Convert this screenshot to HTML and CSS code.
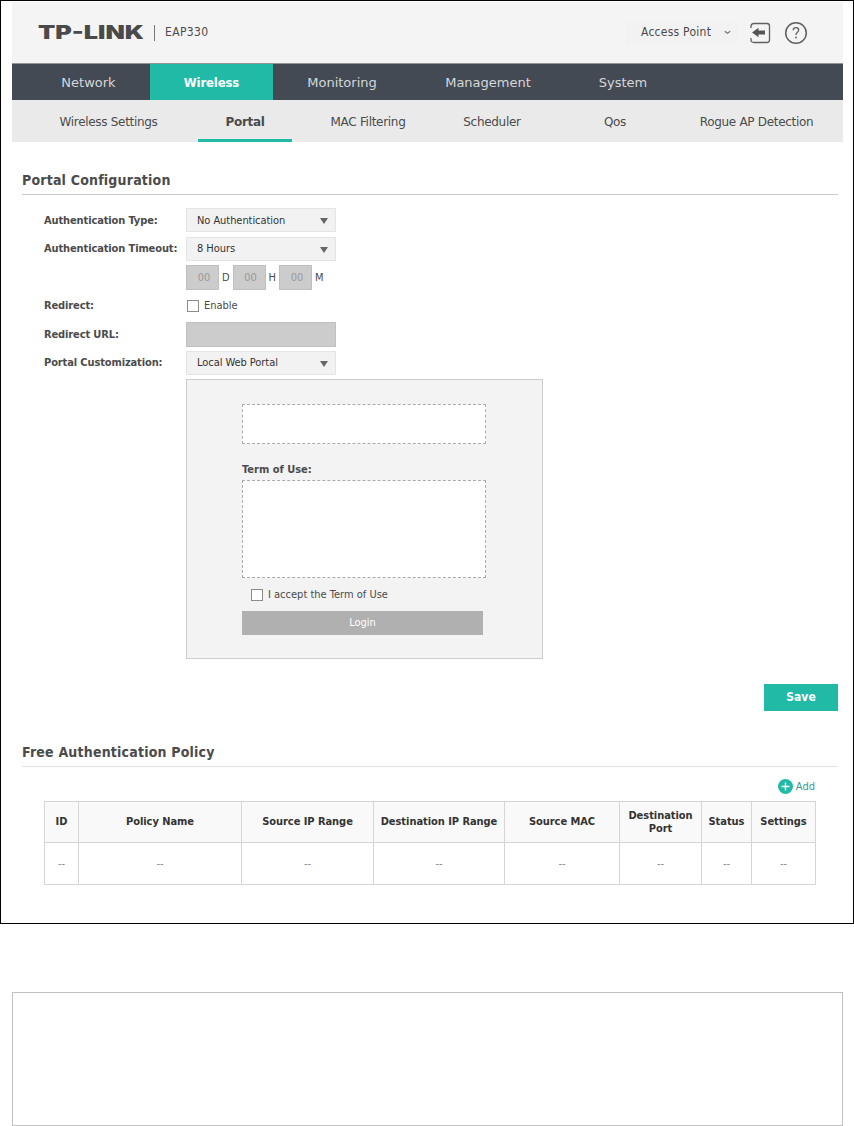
FILE: index.html
```html
<!DOCTYPE html>
<html lang="en">
<head>
<meta charset="utf-8">
<title>EAP330</title>
<link rel="stylesheet" href="styles.css">
</head>
<body>
<main class="frame">
  <header class="top">
    <svg class="logo" width="112" height="24" viewBox="0 0 112 24"><text x="0" y="18" textLength="106" lengthAdjust="spacingAndGlyphs">TP-LINK</text></svg>
    <span class="divider"></span>
    <span class="model">EAP330</span>
    <div class="mode"><span>Access Point</span><svg width="7" height="5" viewBox="0 0 7 5"><path d="M.8 1.2 3.5 3.3 6.2 1.2" fill="none" stroke="#777" stroke-width="1.3"/></svg></div>
    <svg class="logout" width="21" height="22" viewBox="0 0 21 22"><path d="M1 6V4Q1 1.5 4 1.5H17Q19.5 1.5 19.5 4V18Q19.5 20.5 17 20.5H4Q1 20.5 1 18V16" fill="none" stroke="#606060" stroke-width="1.3"/><path d="M2 10.5 8.5 5.8V8.5H15V12.5H8.5V15.2Z" fill="#555"/></svg>
    <svg class="help" width="24" height="24" viewBox="0 0 24 24"><circle cx="12" cy="12" r="10.3" fill="none" stroke="#606060" stroke-width="1.5"/><path d="M9.2 9.2Q9.3 6.7 12 6.7 14.7 6.7 14.7 9.1 14.7 10.5 13.2 11.5 12 12.3 12 14" fill="none" stroke="#606060" stroke-width="1.3"/><rect x="11.2" y="15.7" width="1.6" height="1.7" fill="#606060"/></svg>
  </header>
  <nav class="nav"><a>Network</a><a class="on">Wireless</a><a>Monitoring</a><a>Management</a><a>System</a></nav>
  <nav class="sub"><a>Wireless Settings</a><a class="on">Portal</a><a>MAC Filtering</a><a>Scheduler</a><a>Qos</a><a>Rogue AP Detection</a></nav>

  <section class="portal">
    <h2>Portal Configuration</h2>
    <div class="form">
      <label>Authentication Type:</label><div class="select"><span>No Authentication</span><i></i></div>
      <label>Authentication Timeout:</label><div class="select"><span>8 Hours</span><i></i></div>
      <span></span><div class="time"><b>00</b><span>D</span><b>00</b><span>H</span><b>00</b><span>M</span></div>
      <label>Redirect:</label><div class="check"><i class="box"></i><span>Enable</span></div>
      <label>Redirect URL:</label><div class="url"></div>
      <label>Portal Customization:</label><div class="select"><span>Local Web Portal</span><i></i></div>
    </div>
    <div class="preview">
      <div class="dash logo-area"></div>
      <label>Term of Use:</label>
      <div class="dash terms"></div>
      <div class="check accept"><i class="box"></i><span>I accept the Term of Use</span></div>
      <div class="login"><span>Login</span></div>
    </div>
    <div class="save"><span>Save</span></div>
  </section>

  <section class="policy">
    <h2>Free Authentication Policy</h2>
    <div class="add"><svg width="15" height="15" viewBox="0 0 15 15"><circle cx="7.5" cy="7.5" r="7.5" fill="#20baa6"/><path d="M3.5 7.5h8M7.5 3.5v8" stroke="#fff" stroke-width="1.4"/></svg><span>Add</span></div>
    <table>
      <colgroup><col class="c1"><col class="c2"><col class="c3"><col class="c4"><col class="c5"><col class="c6"><col class="c7"><col class="c8"></colgroup>
      <tr><th>ID</th><th>Policy Name</th><th>Source IP Range</th><th>Destination IP Range</th><th>Source MAC</th><th>Destination<br>Port</th><th>Status</th><th>Settings</th></tr>
      <tr><td>--</td><td>--</td><td>--</td><td>--</td><td>--</td><td>--</td><td>--</td><td>--</td></tr>
    </table>
  </section>
</main>
<div class="note"></div>
</body>
</html>
```
FILE: styles.css
```css
* { box-sizing: border-box; }
body { margin: 0; background: #fff; color: #4b4b4b; font-family: "DejaVu Sans Condensed", "DejaVu Sans", sans-serif; font-size: 11px; }
.frame { width: 854px; height: 924px; border: 1px solid #000; padding: 1px 10px 0 11px; }
.top { height: 61px; background: #f4f4f4; display: flex; align-items: center; padding-left: 26px; }
.logo { flex: none; }
.logo text { font: 900 18.5px Inter, "Liberation Sans", sans-serif; fill: #4a4a4a; }
.divider { width: 1px; height: 16px; background: #777; margin: 0 10px 0 4px; }
.model { width: 461px; font-size: 12px; letter-spacing: .35px; }
.mode { width: 112px; height: 22px; background: #f2f2f2; display: flex; align-items: center; justify-content: space-between; padding: 0 7px 0 15px; font-size: 12px; letter-spacing: .25px; }
.mode svg { position: relative; top: 1px; }
.mode, .model { padding-bottom: 2px; }
.logout { margin-left: 12px; }
.help { margin-left: 13px; }
.nav { height: 37px; background: #434a54; border-top: 1px solid #92969b; display: grid; grid-template: 36px / 123px 123px 138px 154px 116px; padding-left: 15px; color: #d5d7da; font: 13px/38px "DejaVu Sans", sans-serif; text-align: center; }
.nav .on { background: #20baa6; color: #fff; font-weight: bold; font-family: "DejaVu Sans Condensed", "DejaVu Sans", sans-serif; letter-spacing: -.15px; }
.sub { height: 42px; background: #eaeaea; display: grid; grid-template: 42px / 179px 94px 152px 96px 150px 133px; padding-left: 7px; font: 12px/44px "DejaVu Sans", sans-serif; letter-spacing: -.3px; text-align: center; }
.sub .on { border-bottom: 3px solid #20baa6; font-weight: bold; }
section { margin: 0 5px 0 10px; }
h2 { margin: 0; font-size: 14px; line-height: 20px; letter-spacing: .2px; }
.portal { padding-top: 28px; }
.portal h2 { height: 25px; border-bottom: 1px solid #ccc; }
.form { display: grid; grid-template-columns: 142px 150px; grid-auto-rows: 28.5px; padding: 11px 0 0 22px; align-items: center; }
.form label, .preview label { font-weight: bold; white-space: nowrap; }
.form label { letter-spacing: -.12px; }
.select { height: 24px; background: #f2f2f2; border: 1px solid #e5e5e5; display: flex; align-items: center; justify-content: space-between; padding: 0 7px 0 10px; color: #333; letter-spacing: -.06px; }
.select i { border: 4px solid transparent; border-top: 6px solid #666; border-bottom: 0; margin-top: 2px; }
.time { display: flex; align-items: center; }
.time b { width: 33px; height: 25px; background: #ccc; border: 1px solid #bfbfbf; color: #999; font-weight: normal; line-height: 23px; text-align: center; padding-left: 3px; }
.time span { width: 13.5px; padding-left: 3px; }
.check { display: flex; align-items: center; gap: 5px; padding-left: 1px; }
.box { width: 12px; height: 12px; border: 1px solid #8c8c8c; background: #fff; }
.url { height: 25px; background: #ccc; border: 1px solid #c0c0c0; }
.preview { width: 357px; height: 280px; margin: 2px 0 0 164px; background: #f3f3f3; border: 1px solid #ccc; padding: 24px 55px 0; }
.dash { width: 244px; border: 1px dashed #aaa; background: #fff; }
.logo-area { height: 40px; }
.preview label { display: block; line-height: 14px; margin: 19px 0 3px; }
.terms { height: 98px; }
.accept { height: 33px; padding-left: 9px; }
.login { width: 241px; height: 24px; background: #b0b0b0; color: #fff; text-align: center; line-height: 23px; }
.save { width: 74px; height: 27px; margin: 25px 0 0 auto; background: #20baa6; color: #fff; font: bold 12px/27px "DejaVu Sans Condensed", sans-serif; text-align: center; }
.policy { padding-top: 31px; }
.policy h2 { height: 25px; border-bottom: 1px solid #e2e2e2; }
.add { height: 34px; display: flex; align-items: center; justify-content: flex-end; gap: 3px; padding: 5px 23px 0 0; color: #369b8d; }
table { width: 772px; margin-left: 22px; border-collapse: collapse; table-layout: fixed; text-align: center; }
th, td { padding: 0 0 1px; border: 1px solid #d5d5d5; }
th { height: 41px; background: #f9f9f9; color: #333; line-height: 13px; letter-spacing: -.05px; }
td { height: 42px; color: #888; }
.c1 { width: 34px; } .c2 { width: 163px; } .c3 { width: 132px; } .c4 { width: 131px; } .c5 { width: 115px; } .c6 { width: 82px; } .c7 { width: 50px; } .c8 { width: 64px; }
.note { width: 831px; height: 134px; margin: 68px 0 0 12px; border: 1px solid #c0c0c0; }
```
